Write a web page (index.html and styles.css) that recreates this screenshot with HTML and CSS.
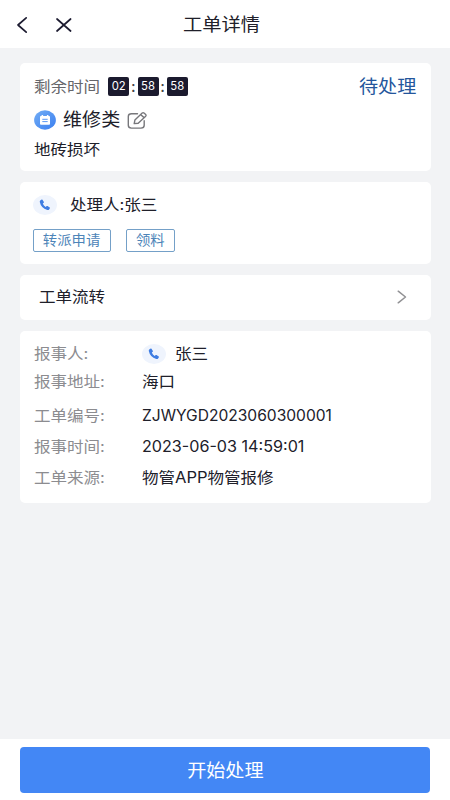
FILE: index.html
```
<!DOCTYPE html>
<html lang="zh-CN">
<head>
<meta charset="utf-8">
<title>工单详情</title>
<link rel="stylesheet" href="styles.css">
</head>
<body>
<header class="header">
  <svg class="back" width="12" height="18" viewBox="0 0 12 18"><path d="M10.200 1.800 2 9l8.200 7.200"/></svg>
  <svg class="close" width="18" height="16" viewBox="0 0 18 16"><path d="M2 2l13.600 12M15.600 2 2 14"/></svg>
  <h1 class="title"><span class="t">工单详情</span></h1>
</header>
<main class="content">
  <section class="card summary">
    <div class="row time-row">
      <span class="t muted">剩余时间</span>
      <div class="countdown"><b>02</b><i>:</i><b>58</b><i>:</i><b>58</b></div>
      <span class="status"><span class="t">待处理</span></span>
    </div>
    <div class="row type-row">
      <svg class="type-icon" width="22" height="20" viewBox="0 0 22 20">
        <defs><linearGradient id="g" x1="0" y1="0" x2="1" y2="1"><stop offset="0" stop-color="#72adf5"/><stop offset="1" stop-color="#3b7ff0"/></linearGradient></defs>
        <ellipse cx="11" cy="10" rx="10.900" ry="9.700" fill="url(#g)"/>
        <path d="M7 6h.6V5h1.500v1h3.800V5h1.500v1H15q1 0 1 1v7q0 .8-1 .8H7q-1 0-1-.8V7q0-1 1-1z" fill="#fff"/>
        <path d="M8.700 9.300h4.600M8.700 11.600h4.600" stroke="#5b98f3" stroke-width="1"/>
      </svg>
      <span class="t type">维修类</span>
      <svg class="edit" width="21" height="19" viewBox="0 0 21 19"><path d="M10.500 2.700H4.500Q1.300 2.700 1.300 5.500v8.800q0 2.800 3.200 2.800h9.500q3.200 0 3.200-2.800V9.700M7.200 12.600l.7-3.500 7.300-7q.9-.8 1.800 0l1.700 1.500q.8.800 0 1.600l-7.500 7zM13.800 3.700l3.300 2.900"/></svg>
    </div>
    <div class="row desc-row"><span class="t">地砖损坏</span></div>
  </section>

  <section class="card handler">
    <div class="row">
      <span class="phone"><svg width="12" height="12" viewBox="0 0 12 12"><path d="M1.200 1.600 2.700.6q.5-.2.800.2l1.400 2.100q.2.500-.2.900l-.9.800q.8 2.100 2.900 3.300l1-.8q.4-.3.900 0l2.100 1.300q.5.300.2.800l-1 1.500q-.6.600-1.600.3Q2 9.200.8 3.100q-.2-1 .4-1.500z"/></svg></span>
      <span class="t">处理人:张三</span>
    </div>
    <div class="buttons">
      <button class="outline wide"><span class="t">转派申请</span></button>
      <button class="outline"><span class="t">领料</span></button>
    </div>
  </section>

  <section class="card flow">
    <span class="t">工单流转</span>
    <svg width="10" height="14" viewBox="0 0 10 14"><path d="M1.200 1.200 8.500 7l-7.300 5.800"/></svg>
  </section>

  <section class="card details">
    <div class="item"><span class="label"><span class="t">报事人:</span></span>
      <span class="phone"><svg width="12" height="12" viewBox="0 0 12 12"><path d="M1.200 1.600 2.700.6q.5-.2.800.2l1.400 2.100q.2.500-.2.900l-.9.800q.8 2.100 2.900 3.300l1-.8q.4-.3.900 0l2.100 1.300q.5.300.2.800l-1 1.500q-.6.600-1.600.3Q2 9.200.8 3.100q-.2-1 .4-1.500z"/></svg></span>
      <span class="t">张三</span></div>
    <div class="item address"><span class="label"><span class="t">报事地址:</span></span><span class="t">海口</span></div>
    <div class="item"><span class="label"><span class="t">工单编号:</span></span><span class="t number">ZJWYGD2023060300001</span></div>
    <div class="item"><span class="label"><span class="t">报事时间:</span></span><span class="t date">2023-06-03 14:59:01</span></div>
    <div class="item"><span class="label"><span class="t">工单来源:</span></span><span class="t">物管APP物管报修</span></div>
  </section>
</main>
<footer class="footer"><button class="start"><span class="t">开始处理</span></button></footer>
</body>
</html>
```
FILE: styles.css
```
* { box-sizing: border-box; }
body {
  margin: 0;
  height: 800px;
  display: flex;
  flex-direction: column;
  overflow: hidden;
  background: #f2f3f5;
  color: #20202a;
  font: 15.3px/20px Inter, "Noto Sans CJK SC", sans-serif;
}
button { font-family: inherit; padding: 0; }
svg { flex: none; fill: none; stroke-linecap: round; stroke-linejoin: round; }
/* Slightly extended lettering */
.t {
  display: inline-block;
  white-space: nowrap;
  transform: scaleX(1.08);
  transform-origin: left center;
}
.header {
  position: relative;
  flex: none;
  height: 48px;
  padding: 1px 0 0 16px;
  display: flex;
  align-items: center;
  background: #fff;
}
.header svg { stroke: #1c1b30; stroke-width: 1.7; }
.close { margin-left: 26.500px; }
.title { margin: 1px 0 0 110.500px; font-size: 17.7px; font-weight: 400; }
.title .t { transform: scaleX(1.09); }
.content {
  flex: 1;
  padding: 15px 19px 0 19.5px;
  display: flex;
  flex-direction: column;
  gap: 11px;
}
.card { background: #fff; border-radius: 5px; flex: none; }
.row { display: flex; align-items: center; }

.summary { height: 108px; padding: 11px 15px 0 14.500px; }
.time-row { height: 25px; }
.muted { color: #66666a; }
.countdown { display: flex; align-items: center; margin-left: 13px; }
.countdown b {
  width: 21px;
  height: 19px;
  border-radius: 2px;
  background: #1b1a2e;
  color: #fff;
  font-size: 11.300px;
  font-weight: 400;
  line-height: 19px;
  text-align: center;
}
.countdown i { width: 8.300px; text-align: center; font-style: normal; font-weight: 500; color: #444; }
.status { margin-left: auto; width: 57px; font-size: 17.700px; color: #24569c; }
.type-row { height: 42px; }
.type { font-size: 17.700px; margin-left: 6.500px; }
.edit { margin-left: 11px; stroke: #77777b; stroke-width: 1.400; }
.desc-row { height: 18px; }

.handler { height: 82px; padding: 10px 13.500px; }
.handler .row { height: 26px; }
.phone {
  width: 24px;
  height: 20px;
  border-radius: 50%;
  background: #eff4fd;
  display: flex;
  align-items: center;
  justify-content: center;
  flex: none;
}
.phone svg { fill: #3f7de2; }
.phone + .t { margin-left: 12.500px; }
.buttons { display: flex; gap: 15px; margin-top: 11px; }
.outline {
  width: 48.500px;
  height: 23px;
  border: 1px solid #74a0c8;
  border-radius: 2px;
  background: #fff;
  color: #4d84b8;
  font-size: 13.300px;
  line-height: 19px;
}
.wide { width: 78px; }
.outline .t, .start .t { transform-origin: center; }

.flow {
  height: 45px;
  padding: 0 24px 2px 19.500px;
  display: flex;
  align-items: center;
  justify-content: space-between;
}
.flow svg { stroke: #919194; stroke-width: 1.500; }

.details { height: 172px; padding: 7px 14.500px; }
.item { height: 31px; display: flex; align-items: center; }
.item.address { margin: -2.500px 0 3px; }
.label { width: 107.500px; color: #8c8c90; }
.item .phone + .t { margin-left: 9.500px; }
.number { transform: scaleX(1.018); }
.date { transform: scaleX(1.055); }

.footer { flex: none; height: 61px; padding: 8px 20px 7px; background: #fff; }
.start {
  display: block;
  width: 100%;
  height: 46px;
  padding-bottom: 3px;
  border: 0;
  border-radius: 4px;
  background: #4387f5;
  color: #fff;
  font-size: 17.700px;
}
```
